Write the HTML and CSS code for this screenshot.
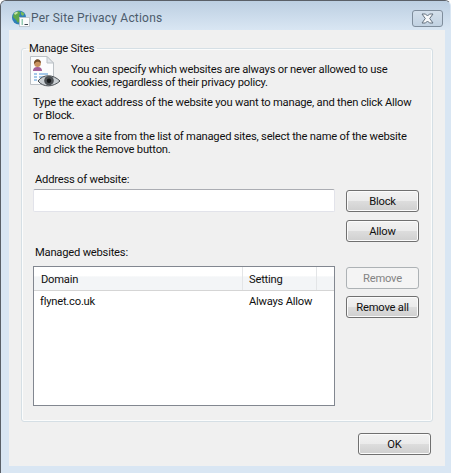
FILE: index.html
```html
<!DOCTYPE html>
<html lang="en">
<head>
  <meta charset="UTF-8" />
  <title>Per Site Privacy Actions</title>
  <link rel="stylesheet" href="styles.css">
</head>
<body>
  <div class="window">
    <div class="titleBar">
      <svg class="titleIcon" width="20" height="17" viewBox="0 0 20 17">
        <circle cx="8" cy="7.5" r="7" fill="#2f7fb8"/>
        <path d="M3 3 L7 1 L9.5 2.5 L8 6 L10 9 L7 13 L5 10 L2 7 Z" fill="#5fa84a"/>
        <path d="M10 1.5 L13.5 3.5 L12 6 L10 4.5 Z" fill="#79bb5c"/>
        <path d="M3 3 L6 1.5 L7 3 L4 5 Z" fill="#c6e3a8"/>
        <rect x="8.5" y="7.5" width="10" height="9" fill="#fafbfc" stroke="#b6c0c8" stroke-width="0.8"/>
        <path d="M10.5 10 H12 M10.5 12 H12 M10.5 14 H12" stroke="#2f9a68" stroke-width="1.1"/>
        <path d="M13.5 14.5 H17" stroke="#3c4650" stroke-width="1"/>
      </svg>
      <span class="titleText">Per Site Privacy Actions</span>
      <button class="closeBtn" aria-label="Close">
        <svg width="17" height="11" viewBox="0 0 17 11">
          <path d="M3 1 L6.5 1 L8.5 3 L10.5 1 L14 1 L10.7 5.5 L14 10 L10.5 10 L8.5 8 L6.5 10 L3 10 L6.3 5.5 Z" fill="#f6f8fa" stroke="#64717f" stroke-width="1"/>
        </svg>
      </button>
    </div>

    <div class="content">
      <fieldset class="group">
        <legend>Manage Sites</legend>

        <div class="intro">
          <svg class="introIcon" width="32" height="32" viewBox="0 0 32 32">
            <path d="M1.5 0.5 H18 L24.5 7 V28.5 H1.5 Z" fill="#fbfcfd" stroke="#bcc1c6"/>
            <path d="M18 0.5 V7 H24.5 Z" fill="#e2e6ea" stroke="#bcc1c6"/>
            <path d="M4 15 C4 11.5 6.5 11 8.5 11 C10.5 11 13 11.5 13 15 Z" fill="#a45f98"/>
            <circle cx="8.5" cy="7.5" r="3.4" fill="#c8925f"/>
            <path d="M5 8 C4.5 2 12 1.5 12 7 C10 6 8 4.5 5 8 Z" fill="#704a28"/>
            <path d="M5 18 H8 M10 18 H19 M5 21 H8 M10 21 H17 M5 24 H8" stroke="#4c93d6" stroke-width="1"/>
            <path d="M9 25 C14 18 24 18 31 25 C24 31.5 14 31.5 9 25 Z" fill="#c9ced2" stroke="#4a4f54"/>
            <circle cx="20" cy="24.7" r="4.8" fill="#4c5054"/>
            <circle cx="20" cy="24.7" r="2.2" fill="#17191b"/>
          </svg>
          <p>You can specify which websites are always or never allowed to use<br>cookies, regardless of their privacy policy.</p>
        </div>

        <p class="note first">Type the exact address of the website you want to manage, and then click Allow<br>or Block.</p>
        <p class="note">To remove a site from the list of managed sites, select the name of the website<br>and click the Remove button.</p>

        <div class="row addressRow">
          <div class="mainCol">
            <label class="fieldLabel addressLabel">Address of website:</label>
            <input class="addressInput" type="text" />
          </div>
          <div class="sideCol">
            <button class="btn">Block</button>
            <button class="btn">Allow</button>
          </div>
        </div>

        <label class="fieldLabel managedLabel">Managed websites:</label>
        <div class="row">
          <div class="list">
            <div class="listHead">
              <div class="colDomain">Domain</div>
              <div class="colSetting">Setting</div>
              <div class="colRest"></div>
            </div>
            <div class="listRow">
              <div class="colDomain">flynet.co.uk</div>
              <div class="colSetting">Always Allow</div>
            </div>
          </div>
          <div class="sideCol listButtons">
            <button class="btn" disabled>Remove</button>
            <button class="btn">Remove all</button>
          </div>
        </div>
      </fieldset>

      <div class="footer">
        <button class="btn">OK</button>
      </div>
    </div>
  </div>
</body>
</html>
```

FILE: styles.css
```css
html, body {
  margin: 0;
  height: 100%;
  background: #fff;
}
body {
  font-family: Roboto, "Liberation Sans", Arial, sans-serif;
  font-size: 11.2px;
  letter-spacing: -0.22px;
  line-height: 13px;
  color: #101010;
  overflow: hidden;
}
.window {
  box-sizing: border-box;
  width: 451px;
  height: 473px;
  display: flex;
  flex-direction: column;
  background: #d9e6f3;
  border: 1px solid #5a6068;
  border-bottom: none;
  border-right-color: #d9e6f3;
  border-radius: 6px 6px 0 0;
  padding: 0 5px 7px 8px;
}
.titleBar {
  flex: none;
  box-sizing: border-box;
  height: 29px;
  display: flex;
  align-items: center;
  margin: 0 -5px 0 -8px;
  padding: 6px 7px 0 9px;
  background: linear-gradient(#bccfe2, #d9e6f3);
  border-radius: 5px 5px 0 0;
}
.titleIcon {
  margin: 0 0 0 1px;
}
.titleText {
  flex: 1;
  font-size: 12px;
  letter-spacing: 0.2px;
  color: #4c5c6c;
}
.closeBtn {
  width: 31px;
  height: 17px;
  padding: 0;
  display: flex;
  align-items: center;
  justify-content: center;
  background: linear-gradient(#d3dfeb, #c2d2e2);
  border: 1px solid #7f8d9c;
  border-radius: 3px;
}
.content {
  flex: 1;
  display: flex;
  flex-direction: column;
  background: #f0f0f0;
  padding: 0 12px 0 12px;
}
.group {
  box-sizing: border-box;
  height: 380px;
  margin: 12px 0 0;
  padding: 1px 0 0 11px;
  border: 1px solid #d5dfe5;
  border-radius: 3px;
  box-shadow: inset 0 0 0 1px #fbfcfc;
}
.group legend {
  padding: 0 3px;
  margin-left: -7px;
}
.intro {
  display: flex;
  align-items: flex-start;
}
.introIcon {
  flex: none;
  margin: 0 10px 0 -4px;
}
.intro p {
  margin: 7px 0 0;
}
p.note {
  margin: 8px 0 0;
}
p.note.first {
  margin-top: 7px;
}
.row {
  display: flex;
}
.addressRow {
  margin-top: 16px;
}
.mainCol {
  width: 302px;
}
.fieldLabel {
  display: block;
  padding-left: 2px;
}
.addressLabel {
  padding-top: 1px;
}
.addressInput {
  box-sizing: border-box;
  display: block;
  width: 302px;
  height: 23px;
  margin-top: 3px;
  background: #fff;
  border: 1px solid #e2e3ea;
  border-top-color: #abadb3;
  border-radius: 2px;
}
.sideCol {
  margin-left: 11px;
  display: flex;
  flex-direction: column;
  gap: 8px;
  padding-top: 18px;
}
.btn {
  width: 73px;
  height: 22px;
  padding: 0;
  font: inherit;
  letter-spacing: inherit;
  color: #101010;
  background: linear-gradient(#f2f2f2 0, #ebebeb 48%, #dddddd 50%, #cfcfcf 100%);
  border: 1px solid #707070;
  border-radius: 3px;
  box-shadow: inset 0 0 0 1px #fbfbfb;
}
.btn:disabled {
  color: #838383;
  background: #f4f4f4;
  border-color: #adb2b5;
  box-shadow: none;
}
.managedLabel {
  margin-top: 4px;
  margin-bottom: 7px;
}
.list {
  box-sizing: border-box;
  width: 302px;
  height: 140px;
  background: #fff;
  border: 1px solid #828790;
}
.listHead {
  display: flex;
  height: 24px;
  align-items: stretch;
  background: linear-gradient(#fff 0, #fff 40%, #f3f5f7 42%, #f3f5f7 100%);
  border-bottom: 1px solid #d5d5d5;
  box-sizing: border-box;
}
.listHead > div {
  display: flex;
  align-items: center;
  padding-top: 2px;
  border-right: 1px solid #e3e5e7;
}
.colDomain {
  box-sizing: border-box;
  width: 209px;
  padding-left: 7px;
}
.colSetting {
  box-sizing: border-box;
  width: 74px;
  padding-left: 6px;
}
.listHead .colRest {
  flex: 1;
  border-right: none;
}
.listRow {
  display: flex;
  padding-top: 4px;
}
.listRow .colDomain {
  padding-left: 6px;
}
.listButtons {
  padding-top: 1px;
  gap: 7px;
}
.footer {
  display: flex;
  justify-content: flex-end;
  margin-top: 11px;
  padding-right: 2px;
}
```
